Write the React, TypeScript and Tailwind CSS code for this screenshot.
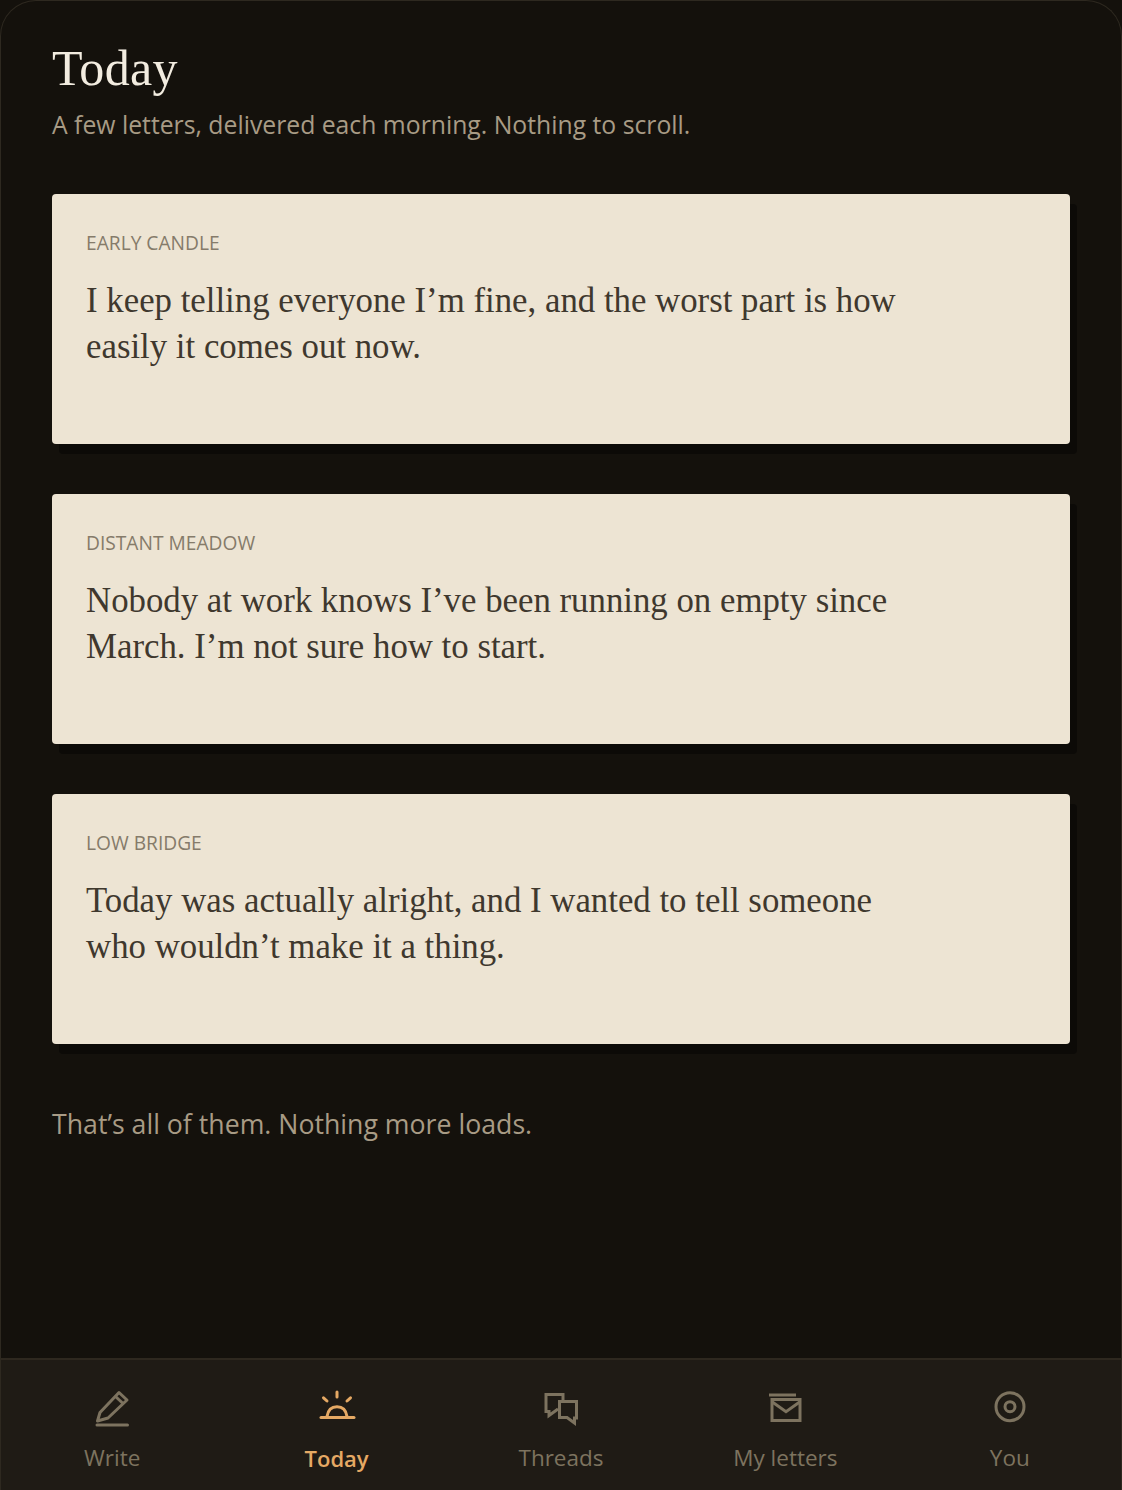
import type { ReactNode } from 'react';

const LETTERS = [
  {
    name: 'EARLY CANDLE',
    lines: ['I keep telling everyone I’m fine, and the worst part is how', 'easily it comes out now.'],
  },
  {
    name: 'DISTANT MEADOW',
    lines: ['Nobody at work knows I’ve been running on empty since', 'March. I’m not sure how to start.'],
  },
  {
    name: 'LOW BRIDGE',
    lines: ['Today was actually alright, and I wanted to tell someone', 'who wouldn’t make it a thing.'],
  },
];

const Icon = ({ children }: { children: ReactNode }) => (
  <svg viewBox="0 0 36 36" fill="none" stroke="currentColor" strokeWidth="3" className="w-9 h-9 overflow-visible">
    {children}
  </svg>
);

const TABS = [
  {
    label: 'Write',
    icon: (
      <Icon>
        <path d="M3.5 32 L6 23.5 L25 3.5 L33 11 L14 29 Z" strokeLinejoin="round" />
        <path d="M21.5 7.5 L29 14.5" />
        <path d="M3 36 H33.5" strokeLinecap="round" />
      </Icon>
    ),
  },
  {
    label: 'Today',
    active: true,
    icon: (
      <Icon>
        <path d="M18 3 V8 M4.5 8.8 L8 12 M31.5 8.8 L28 12" strokeLinecap="round" />
        <path d="M8 27.5 C9 21 13 17.8 18 17.8 C23 17.8 27 21 28 27.5" />
        <path d="M2 28.5 H35" strokeLinecap="round" />
      </Icon>
    ),
  },
  {
    label: 'Threads',
    icon: (
      <Icon>
        <path d="M20 12 V5.5 H3 V22.5 H6 V26.5 L15 20" />
        <path d="M16.5 12.5 H33.5 V29 H31.5 V34 L24 28.5 H16.5 Z" />
      </Icon>
    ),
  },
  {
    label: 'My letters',
    icon: (
      <Icon>
        <path d="M2 6 H29" />
        <path d="M5 10.5 H33 V31.5 H5 Z" />
        <path d="M5 12.7 L19 22.7 L33 12.7" />
      </Icon>
    ),
  },
  {
    label: 'You',
    icon: (
      <Icon>
        <circle cx="18" cy="17.7" r="14" />
        <circle cx="18" cy="17.7" r="5" />
      </Icon>
    ),
  },
];

export default function App() {
  return (
    <div className="w-[1122px] h-[1490px] bg-[#14110c]">
      <div className="h-full bg-[#14110c] rounded-t-[36px] border border-b-0 border-[#2e2920] flex flex-col overflow-hidden font-['Open_Sans','Noto_Sans',sans-serif]">
        <main className="flex-1 px-[51px] pt-[41px]">
          <h1 className="font-['Liberation_Serif',serif] text-[50px] leading-[52px] tracking-[0.3px] text-[#f2ece0]">
            Today
          </h1>
          <p className="mt-[14px] text-[24.75px] leading-[34px] text-[#a89b85]">
            A few letters, delivered each morning. Nothing to scroll.
          </p>

          <div className="mt-[52px] flex flex-col gap-[50px] w-[1018px]">
            {LETTERS.map((letter) => (
              <article
                key={letter.name}
                className="h-[250px] rounded-[4px] bg-[#ede4d3] px-[34px] pt-[36px] shadow-[7px_10px_0_rgba(0,0,0,0.4)]"
              >
                <div className="text-[19.2px] leading-[26px] text-[#857b6a]">{letter.name}</div>
                <p className="mt-[22px] font-['Liberation_Serif',serif] text-[34.8px] leading-[46px] text-[#3f382e]">
                  {letter.lines.map((line) => (
                    <span key={line} className="block">
                      {line}
                    </span>
                  ))}
                </p>
              </article>
            ))}
          </div>

          <p className="mt-[62px] text-[26.7px] leading-[36px] text-[#a89b85]">
            That’s all of them. Nothing more loads.
          </p>
        </main>

        <nav className="h-[132px] shrink-0 -mx-px bg-[#1f1b15] border-t-2 border-[#2e281f] grid grid-cols-5">
          {TABS.map((tab) => (
            <div
              key={tab.label}
              className={`flex flex-col items-center pt-[29px] ${tab.active ? 'text-[#e5a964]' : 'text-[#7d735f]'}`}
            >
              {tab.icon}
              <span
                className={`mt-[18px] leading-[30px] ${tab.active ? 'text-[22px] font-semibold' : 'text-[22.5px]'}`}
              >
                {tab.label}
              </span>
            </div>
          ))}
        </nav>
      </div>
    </div>
  );
}
